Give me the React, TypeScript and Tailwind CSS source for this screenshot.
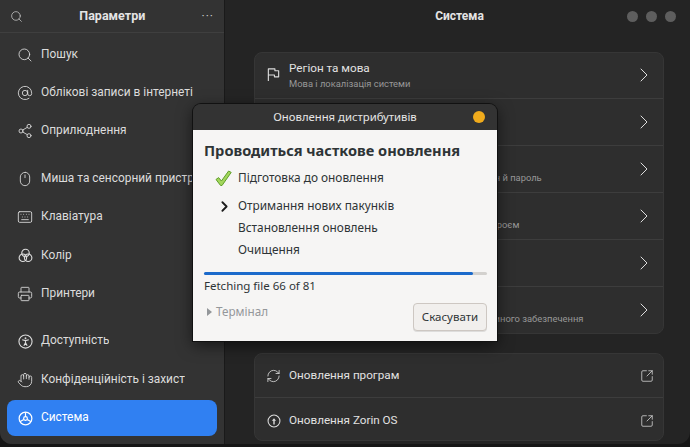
import { ReactNode } from "react";
import {
  AtSign,
  ChevronRight,
  Hand,
  Keyboard,
  Mouse,
  Printer,
  RefreshCw,
  Search,
  Share2,
  SquareArrowOutUpRight,
} from "lucide-react";

const iconProps = { size: 16, strokeWidth: 1.3 };

const FlagIcon = () => (
  <svg width="15" height="15" viewBox="0 0 16 16" fill="none" stroke="currentColor" strokeWidth="1.2" strokeLinejoin="round">
    <path d="M2.5 15V2h7v2h4v6.5h-4.5v-2h-6.5" />
  </svg>
);

const ColorIcon = () => (
  <svg width="15" height="15" viewBox="0 0 16 16" fill="none" stroke="currentColor" strokeWidth="1.2">
    <circle cx="8" cy="5.3" r="4" />
    <circle cx="5.2" cy="10.4" r="4" />
    <circle cx="10.8" cy="10.4" r="4" />
  </svg>
);

const AccessIcon = () => (
  <svg width="15" height="15" viewBox="0 0 16 16" fill="none" stroke="currentColor" strokeWidth="1.2">
    <circle cx="8" cy="8" r="7" />
    <circle cx="8" cy="4.5" r="1" fill="currentColor" stroke="none" />
    <path d="M4.5 6.2 8 7l3.5-.8M8 7v2.5m0 0L6.2 12.5M8 9.5l1.8 3" />
  </svg>
);

const SystemIcon = () => (
  <svg width="15" height="15" viewBox="0 0 16 16" fill="none" stroke="currentColor" strokeWidth="1.3">
    <circle cx="8" cy="8" r="6.8" />
    <circle cx="8" cy="8" r="2" />
    <path d="M8 1.2V6M1.9 11.5 6.2 9M14.1 11.5 9.8 9" />
  </svg>
);

const UpgradeIcon = () => (
  <svg width="14" height="14" viewBox="0 0 16 16" fill="none" stroke="currentColor" strokeWidth="1.2">
    <circle cx="8" cy="8" r="6.8" />
    <path d="M8 12V6.5" strokeWidth="1.6" />
    <path d="M5.6 7.8 8 4.8l2.4 3z" fill="currentColor" stroke="none" />
  </svg>
);

const CheckIcon = () => (
  <svg width="17" height="17" viewBox="0 0 17 17">
    <path d="M1 9.5 3.6 7.6 6.4 11 13.6 1l2.6 1.4L7 15.5H5.6z" fill="#a3d65c" stroke="#5f9e2a" strokeWidth="1" strokeLinejoin="round" />
  </svg>
);

const SideItem = ({ icon, label, active }: { icon: ReactNode; label: string; active?: boolean }) => (
  <div className="h-[38.4px] px-[7px] py-[1px]">
    <div
      className={`flex h-[36px] items-center gap-[8px] rounded-lg pl-[10px] ${
        active ? "bg-[#3080f2] text-white" : "text-[#dcdcdc]"
      }`}
    >
      <span className="flex w-[16px] shrink-0 justify-center">{icon}</span>
      <span className="truncate whitespace-nowrap text-[11.9px]">{label}</span>
    </div>
  </div>
);

const SettingsRow = ({ icon, title, sub, first }: { icon?: ReactNode; title?: string; sub?: string; first?: boolean }) => (
  <div className={`flex items-center pl-[11px] pr-[7px] ${first ? "h-[45px] pb-[2px]" : "h-[47px] border-t border-[#3d3d3d]"}`}>
    <span className="flex w-[15px] shrink-0 justify-center text-[#dcdcdc]">{icon}</span>
    <div className="ml-[8px] min-w-0 flex-1">
      <div className="text-[11.7px] leading-[17px] text-[#e2e2e2]">{title}</div>
      <div className="text-[9.4px] leading-[13px] whitespace-nowrap text-[#989898]">{sub}</div>
    </div>
    <ChevronRight size={24} strokeWidth={1} className="text-[#dddddd]" />
  </div>
);

const LinkRow = ({ icon, title, divider }: { icon: ReactNode; title: string; divider?: boolean }) => (
  <div className={`flex h-[43px] items-center pl-[11px] pr-[9px] ${divider ? "border-t border-[#3d3d3d] pt-[3px]" : ""}`}>
    <span className="flex w-[15px] shrink-0 justify-center text-[#dcdcdc]">{icon}</span>
    <span className="ml-[8px] flex-1 text-[11.7px] text-[#e2e2e2]">{title}</span>
    <SquareArrowOutUpRight size={14} strokeWidth={1.3} className="text-[#dddddd]" />
  </div>
);

const UpdateDialog = () => (
  <div className="absolute top-[104px] left-[193px] flex h-[237px] w-[304px] flex-col overflow-hidden rounded-t-[8px] shadow-[0_0_0_1px_#111,0_4px_16px_rgba(0,0,0,0.6)] font-['Noto_Sans',sans-serif]">
    <div className="relative flex h-[26px] shrink-0 items-center justify-center bg-[#333333] text-[11.3px] text-[#e6e6e6]">
      Оновлення дистрибутивів
      <span className="absolute top-[7px] right-[12px] size-[12px] rounded-full bg-[#f0ab1c]" />
    </div>
    <div className="flex flex-1 flex-col bg-[#f6f5f4] pt-[10px] pr-[10px] pl-[11px] text-[#2e3436]">
      <div className="text-[14.6px] leading-[20px] font-bold">Проводиться часткове оновлення</div>
      <div className="mt-[9px] flex h-[18px] items-center text-[11.85px]">
        <span className="ml-[11px] w-[23px]"><CheckIcon /></span>
        <span>Підготовка до оновлення</span>
      </div>
      <div className="mt-[10px] flex h-[18px] items-center text-[11.85px]">
        <span className="ml-[13px] w-[21px]"><ChevronRight size={17} strokeWidth={2.6} className="-ml-[1px] text-[#1c1c1c]" /></span>
        <span>Отримання нових пакунків</span>
      </div>
      <div className="mt-[3px] h-[18px] pl-[34px] text-[11.85px] leading-[18px]">Встановлення оновлень</div>
      <div className="mt-[4px] h-[18px] pl-[34px] text-[11.85px] leading-[18px]">Очищення</div>
      <div className="mt-[14px] h-[3px] rounded-full bg-[#d3d1ce]">
        <div className="h-full w-[95%] rounded-full bg-[#1b6acb]" />
      </div>
      <div className="mt-[2px] text-[11.5px] leading-[18px]">Fetching file 66 of 81</div>
      <div className="mt-[8px] flex items-start justify-between">
        <div className="flex items-center gap-[4px] pl-[3px] text-[11.7px] text-[#94979a]">
          <span className="h-0 w-0 border-y-[4px] border-l-[5px] border-y-transparent border-l-[#94979a]" />
          Термінал
        </div>
        <button className="h-[28px] w-[74px] rounded-[4px] border border-[#cdc7c2] bg-[#f1efed] text-[11.5px] text-[#2e3436] shadow-[0_1px_0_rgba(0,0,0,0.1)]">
          Скасувати
        </button>
      </div>
    </div>
  </div>
);

export default function App() {
  return (
    <div className="relative h-[447px] w-[690px] overflow-hidden bg-[#161616] font-['Roboto',sans-serif]">
      <div className="flex h-[444px] overflow-hidden rounded-b-[12px] bg-[#242424]">
        <aside className="w-[225px] shrink-0 border-r border-[#1a1a1a] bg-[#333333]">
          <div className="flex h-[33px] items-center justify-between border-b border-[#3f3f3f] pr-[10px] pl-[10px]">
            <Search size={13} strokeWidth={1.4} className="text-[#c8c8c8]" />
            <span className="text-[12.5px] font-bold text-[#e4e4e4]">Параметри</span>
            <span className="text-[12px] leading-none tracking-[1px] text-[#c8c8c8]">···</span>
          </div>
          <div className="pt-[2.6px]">
            <SideItem icon={<Search {...iconProps} />} label="Пошук" />
            <SideItem icon={<AtSign {...iconProps} />} label="Облікові записи в інтернеті" />
            <SideItem icon={<Share2 {...iconProps} />} label="Оприлюднення" />
          </div>
          <div className="mt-[9px]">
            <SideItem icon={<Mouse {...iconProps} />} label="Миша та сенсорний пристрій" />
            <SideItem icon={<Keyboard {...iconProps} />} label="Клавіатура" />
            <SideItem icon={<ColorIcon />} label="Колір" />
            <SideItem icon={<Printer {...iconProps} />} label="Принтери" />
          </div>
          <div className="mt-[9px]">
            <SideItem icon={<AccessIcon />} label="Доступність" />
            <SideItem icon={<Hand {...iconProps} />} label="Конфіденційність і захист" />
            <SideItem icon={<SystemIcon />} label="Система" active />
          </div>
        </aside>
        <main className="min-w-0 flex-1">
          <div className="grid h-[32px] grid-cols-[1fr_auto_1fr] items-center pr-[14px] pl-[18px]">
            <span />
            <span className="text-[12px] font-bold text-[#e4e4e4]">Система</span>
            <div className="flex justify-end gap-[8px]">
              <span className="size-[11px] rounded-full bg-[#5e5e5e]" />
              <span className="size-[11px] rounded-full bg-[#5e5e5e]" />
              <span className="size-[11px] rounded-full bg-[#5e5e5e]" />
            </div>
          </div>
          <div className="mt-[20px] ml-[29px] w-[410px]">
            <div className="rounded-[8px] border border-[#363636] bg-[#2e2e2e]">
              <SettingsRow first icon={<FlagIcon />} title="Регіон та мова" sub="Мова і локалізація системи" />
              <SettingsRow title="Дата і час" sub="Часовий пояс" />
              <SettingsRow title="Користувачі" sub="Додавання, вилучення користувачів, зміна імен й пароль" />
              <SettingsRow title="Віддалений доступ" sub="Віддалений доступ та спільне керування пристроєм" />
              <SettingsRow title="Про систему" sub="Відомості про систему" />
              <SettingsRow title="Оновлення" sub="Перегляд відомостей про наявні версії програмного забезпечення" />
            </div>
            <div className="mt-[19px] rounded-[8px] border border-[#363636] bg-[#2e2e2e]">
              <LinkRow icon={<RefreshCw {...iconProps} />} title="Оновлення програм" />
              <LinkRow divider icon={<UpgradeIcon />} title="Оновлення Zorin OS" />
            </div>
          </div>
        </main>
      </div>
      <UpdateDialog />
    </div>
  );
}
